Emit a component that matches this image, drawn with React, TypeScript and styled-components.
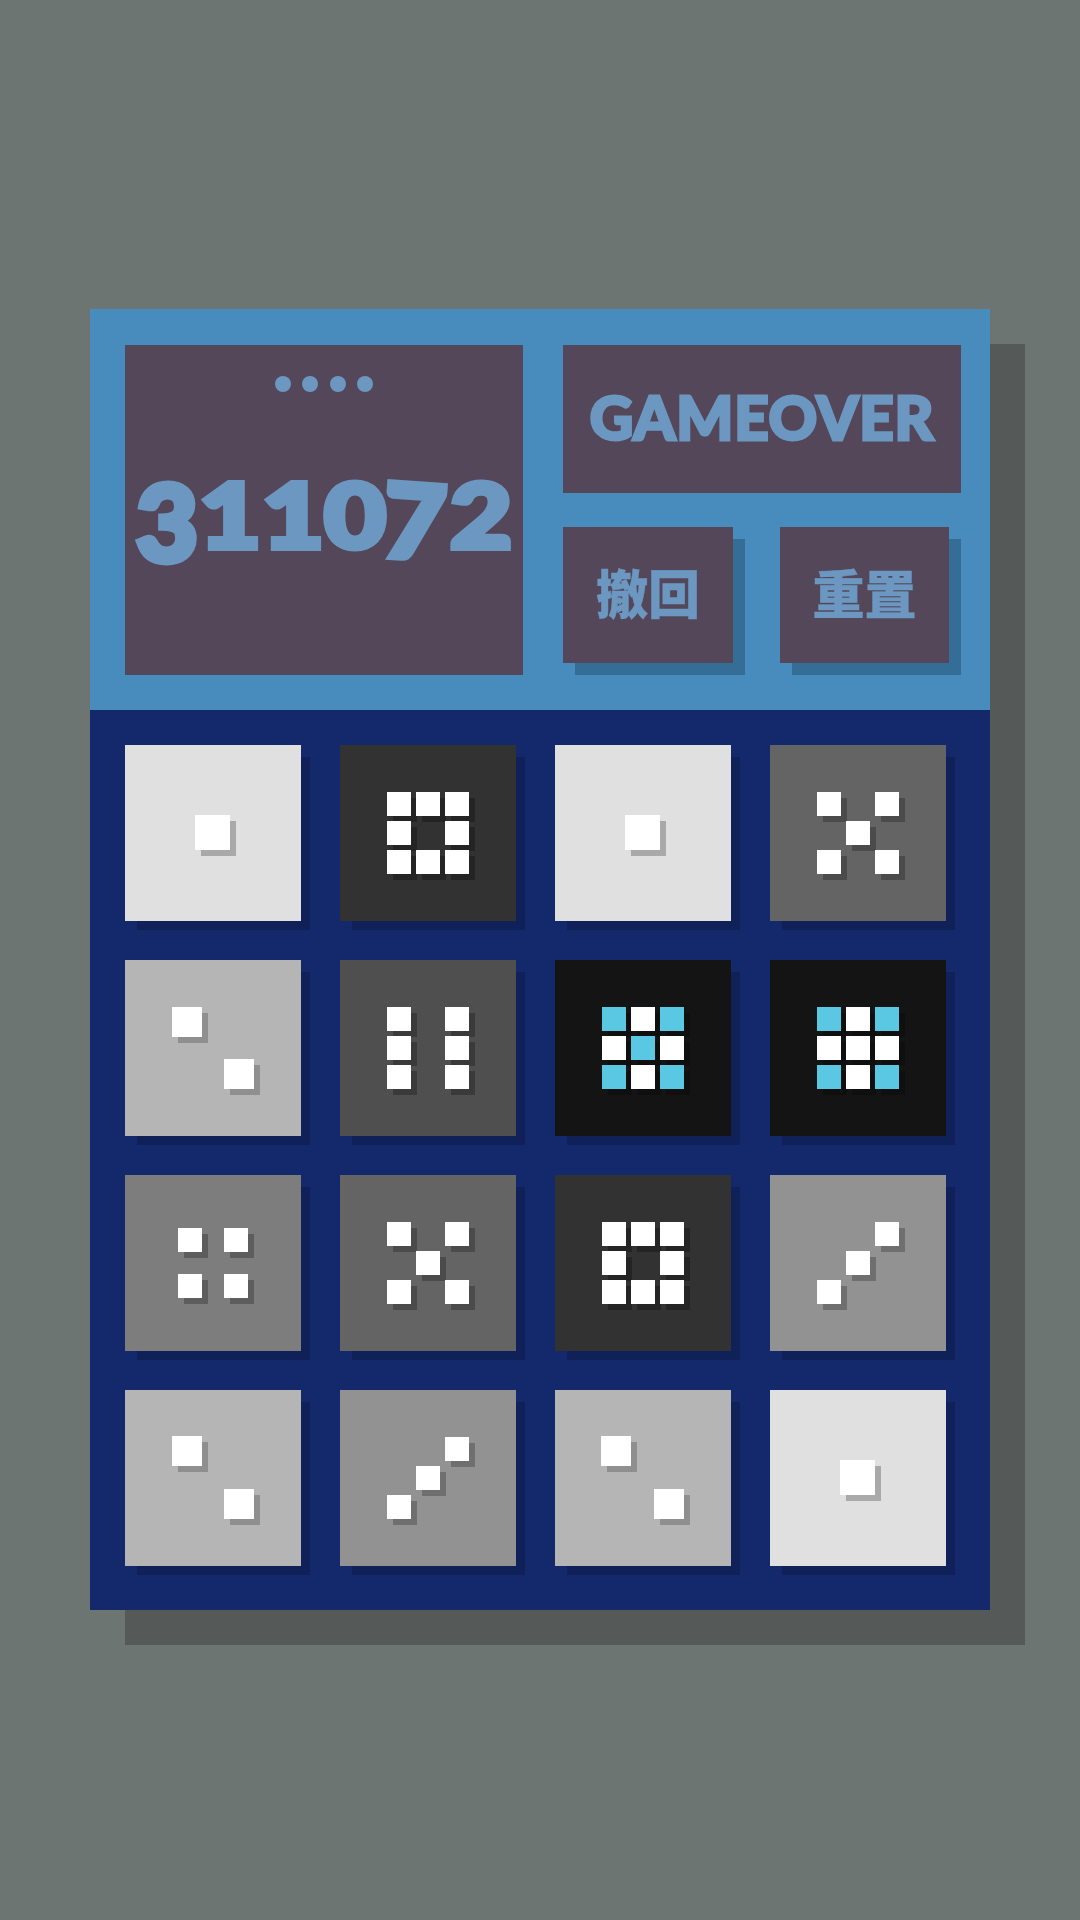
import React from "react";
import styled, { createGlobalStyle } from "styled-components";

const Global = createGlobalStyle`
  html, body { margin: 0; padding: 0; background: #6c7572; }
  body { font-family: "Lato", "Noto Sans CJK SC", sans-serif; }
`;

const Page = styled.div`
  width: 1080px;
  height: 1920px;
  display: flex;
  align-items: center;
  padding-left: 90px;
  padding-bottom: 1px;
  box-sizing: border-box;
  background: #6c7572;
`;

const Panel = styled.div`
  width: 900px;
  display: flex;
  flex-direction: column;
  background: #13296b;
  box-shadow: 35px 35px 0 #555a58;
`;

const Header = styled.header`
  display: grid;
  grid-template-columns: 398px 398px;
  column-gap: 40px;
  padding: 36px 29px 35px 35px;
  background: #478cbc;
`;

const ScoreBox = styled.div`
  height: 330px;
  display: flex;
  flex-direction: column;
  align-items: center;
  background: #54475a;
  color: #6b97c1;
`;

const Dots = styled.div`
  display: flex;
  gap: 11.6px;
  margin-top: 31px;
`;

const Dot = styled.span`
  width: 16px;
  height: 16px;
  border-radius: 50%;
  background: #6b97c1;
`;

const Score = styled.div`
  margin-top: 76px;
  display: flex;
  align-items: flex-start;
  gap: 10.5px;
  font-family: "Lato", sans-serif;
  font-weight: 900;
  font-size: 90px;
  line-height: 90px;
  -webkit-text-stroke: 6px #6b97c1;
`;

const Digit = styled.span<{ $tilt?: number; $stretch?: number }>`
  display: inline-block;
  transform-origin: top center;
  transform: ${(p) => `rotate(${p.$tilt ?? 0}deg) scale(1.18, ${p.$stretch ?? 1})`};
`;

const Side = styled.div`
  display: flex;
  flex-direction: column;
  gap: 34px;
`;

const Status = styled.div`
  height: 148px;
  box-sizing: border-box;
  padding-bottom: 5px;
  display: flex;
  align-items: center;
  justify-content: center;
  background: #54475a;
  color: #6b97c1;
  font-family: "Lato", sans-serif;
  font-weight: 900;
  font-size: 60px;
  line-height: 1;
  letter-spacing: 0.8px;
  -webkit-text-stroke: 3px #6b97c1;
`;

const Actions = styled.div`
  display: flex;
  gap: 47px;
  padding-bottom: 12px;
`;

const Action = styled.div<{ $wide: number }>`
  width: ${(p) => p.$wide}px;
  height: 136px;
  box-sizing: border-box;
  padding-bottom: 6px;
  display: flex;
  align-items: center;
  justify-content: center;
  background: #54475a;
  box-shadow: 12px 12px 0 #346d96;
  color: #6b97c1;
  font-family: "Noto Sans CJK TC", "Noto Sans CJK SC", sans-serif;
  font-weight: 900;
  font-size: 52px;
  line-height: 1;
  -webkit-text-stroke: 0.4px #6b97c1;
`;

const Board = styled.div`
  display: grid;
  grid-template-columns: repeat(4, 175.6px);
  grid-auto-rows: 175.6px;
  gap: 39.4px;
  padding: 35px 0 44.4px 35px;
`;

const Tile = styled.div<{ $bg: string; $shade: string }>`
  display: flex;
  align-items: center;
  justify-content: center;
  background: ${(p) => p.$bg};
  box-shadow: 10.5px 10.5px 0 -1.5px #10215a;
  --pip-shadow: ${(p) => p.$shade};
`;

const Pips = styled.div<{ $cols: number; $size: number; $gap: number }>`
  display: grid;
  grid-template-columns: repeat(${(p) => p.$cols}, ${(p) => p.$size}px);
  grid-auto-rows: ${(p) => p.$size}px;
  gap: ${(p) => p.$gap}px;
`;

const Pip = styled.span<{ $on: boolean; $cyan: boolean; $depth: number }>`
  background: ${(p) => (p.$cyan ? "#5ac8e2" : p.$on ? "#ffffff" : "transparent")};
  box-shadow: ${(p) => (p.$on ? `${p.$depth}px ${p.$depth}px 0 var(--pip-shadow)` : "none")};
`;

type Layout = { rows: string[]; size: number; gap: number; depth: number };

const LAYOUTS: Record<string, Layout> = {
  one: { rows: ["x"], size: 35, gap: 0, depth: 6 },
  two: { rows: ["x.", ".x"], size: 30, gap: 22.6, depth: 6 },
  three: { rows: ["..x", ".x.", "x.."], size: 24, gap: 5, depth: 6 },
  four: { rows: ["xx", "xx"], size: 24, gap: 22.4, depth: 6 },
  five: { rows: ["x.x", ".x.", "x.x"], size: 24, gap: 5, depth: 6 },
  six: { rows: ["x.x", "x.x", "x.x"], size: 24, gap: 5, depth: 6 },
  eight: { rows: ["xxx", "x.x", "xxx"], size: 24, gap: 5, depth: 6 },
  nineA: { rows: ["cxc", "xcx", "cxc"], size: 24, gap: 5, depth: 6 },
  nineB: { rows: ["cxc", "xxx", "cxc"], size: 24, gap: 5, depth: 6 },
};

const STYLE: Record<string, { bg: string; shade: string }> = {
  one: { bg: "#e0e0e0", shade: "#a9a9a9" },
  two: { bg: "#b5b5b5", shade: "#8f8f8f" },
  three: { bg: "#929292", shade: "#6f6f6f" },
  four: { bg: "#7d7d7d", shade: "#5d5d5d" },
  five: { bg: "#646464", shade: "#4b4b4b" },
  six: { bg: "#4f4f4f", shade: "#3a3a3a" },
  eight: { bg: "#323232", shade: "#242424" },
  nineA: { bg: "#141414", shade: "#0f0f0f" },
  nineB: { bg: "#141414", shade: "#0f0f0f" },
};

const BOARD = [
  "one", "eight", "one", "five",
  "two", "six", "nineA", "nineB",
  "four", "five", "eight", "three",
  "two", "three", "two", "one",
];

function GameTile({ kind }: { kind: string }) {
  const l = LAYOUTS[kind];
  const s = STYLE[kind];
  const cells = l.rows.join("").split("");
  return (
    <Tile $bg={s.bg} $shade={s.shade}>
      <Pips $cols={l.rows[0].length} $size={l.size} $gap={l.gap}>
        {cells.map((c, i) => (
          <Pip key={i} $on={c !== "."} $cyan={c === "c"} $depth={l.depth} />
        ))}
      </Pips>
    </Tile>
  );
}

export default function App() {
  return (
    <Page>
      <Global />
      <Panel>
        <Header>
          <ScoreBox>
            <Dots>
              <Dot />
              <Dot />
              <Dot />
              <Dot />
            </Dots>
            <Score>
              <Digit $stretch={1.16}>3</Digit>
              <Digit>1</Digit>
              <Digit>1</Digit>
              <Digit>0</Digit>
              <Digit $tilt={4} $stretch={1.13}>7</Digit>
              <Digit>2</Digit>
            </Score>
          </ScoreBox>
          <Side>
            <Status>GAMEOVER</Status>
            <Actions>
              <Action $wide={170}>撤回</Action>
              <Action $wide={169}>重置</Action>
            </Actions>
          </Side>
        </Header>
        <Board>
          {BOARD.map((k, i) => (
            <GameTile key={i} kind={k} />
          ))}
        </Board>
      </Panel>
    </Page>
  );
}
